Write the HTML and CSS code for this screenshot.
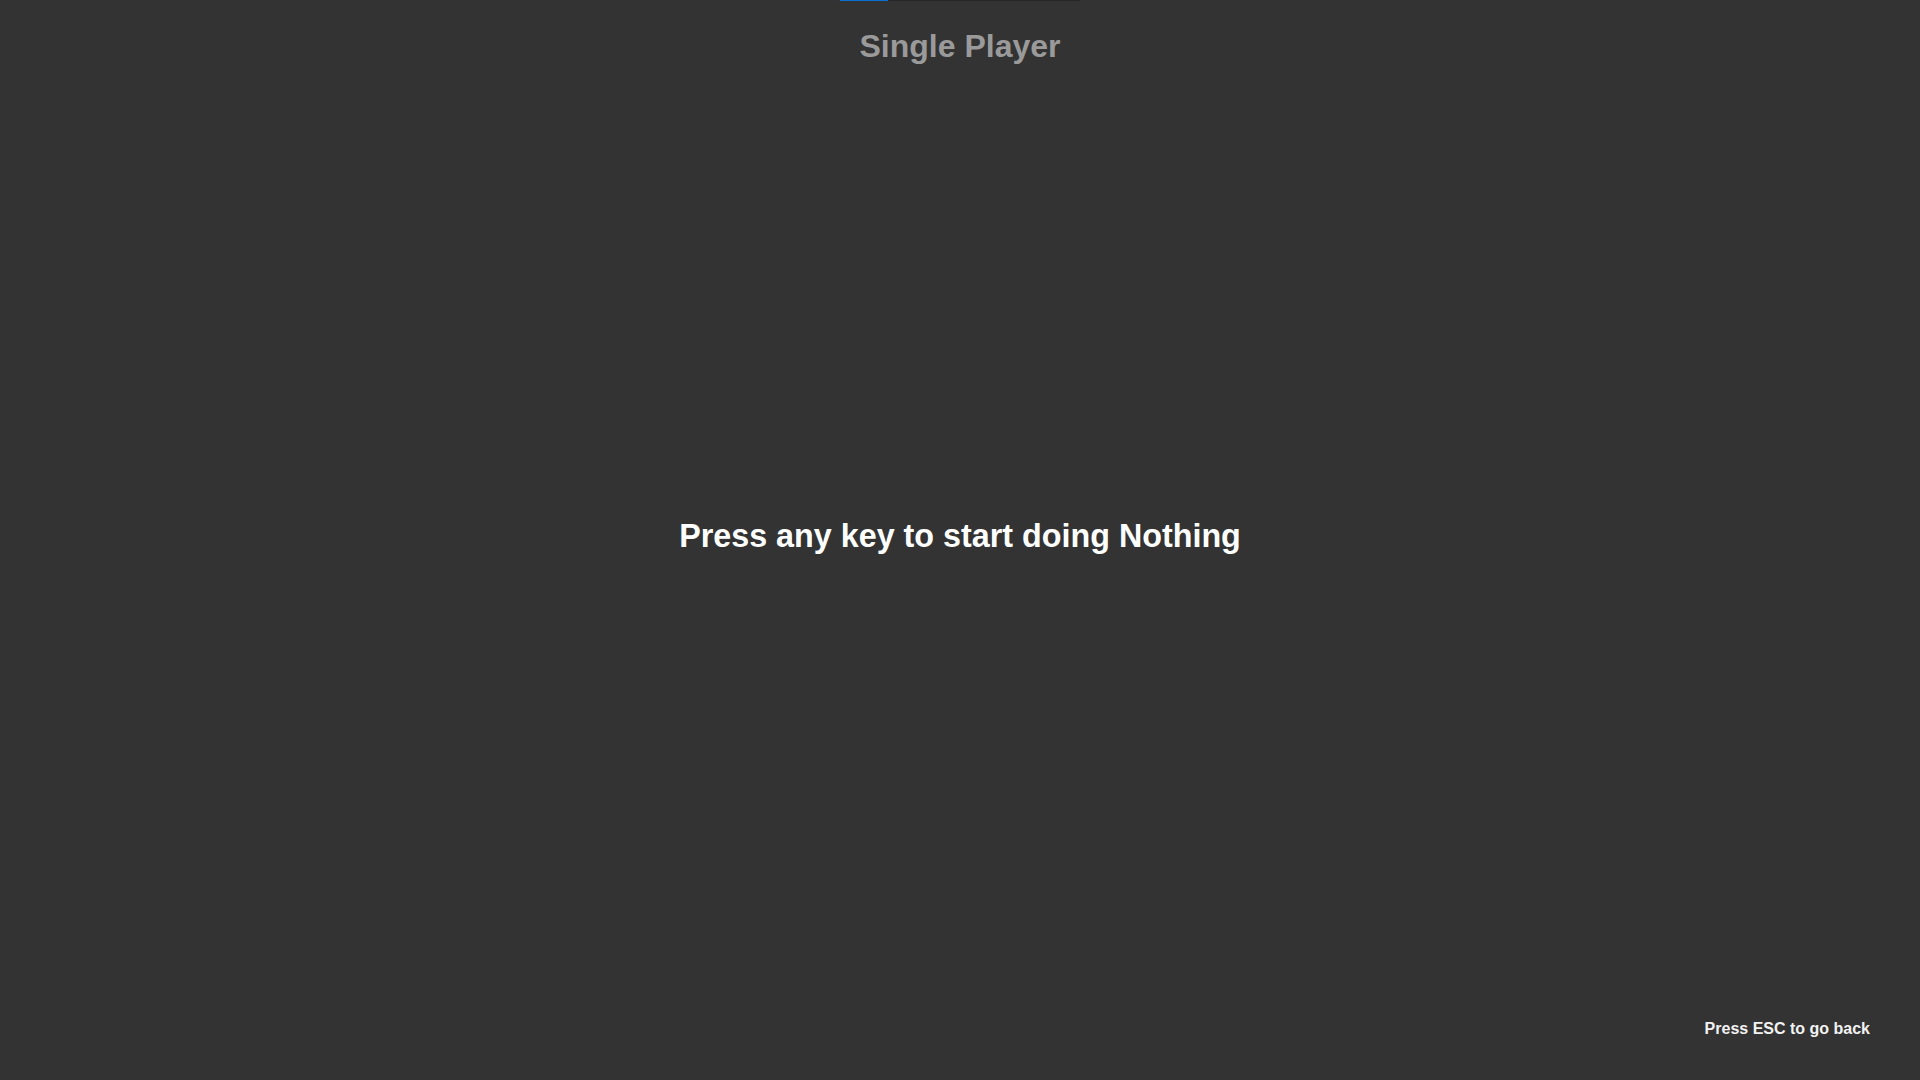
FILE: index.html
```html
<!DOCTYPE html>
<html lang="en">
<head>
<meta charset="utf-8">
<title>Single Player</title>
<link rel="stylesheet" href="styles.css">
</head>
<body>
<div class="screen">
  <header class="top">
    <div class="progress"><div class="progress-fill"></div></div>
    <h1 class="title">Single Player</h1>
  </header>
  <main class="center">
    <p class="prompt">Press any key to start doing Nothing</p>
  </main>
  <footer class="bottom">
    <span class="hint">Press ESC to go back</span>
  </footer>
</div>
</body>
</html>
```
FILE: styles.css
```css
html, body {
  margin: 0;
  padding: 0;
  height: 100%;
  background: #333333;
}
body {
  font-family: "Liberation Sans", Arial, Helvetica, sans-serif;
  overflow: hidden;
}
.screen {
  height: 100vh;
  display: grid;
  grid-template-rows: auto 1fr auto;
}
.top {
  display: flex;
  flex-direction: column;
  align-items: center;
}
.progress {
  width: 240px;
  height: 1px;
  background: #262626;
  display: flex;
}
.progress-fill {
  width: 20%;
  background: #0a70d6;
}
.title {
  margin: 27px 0 0;
  font-size: 32px;
  font-weight: 700;
  line-height: 37px;
  color: #9a9a9a;
}
.center {
  display: flex;
  align-items: center;
  justify-content: center;
}
.prompt {
  margin: 0 0 12px;
  font-size: 32.3px;
  font-weight: 700;
  line-height: 37px;
  color: #ffffff;
}
.bottom {
  display: flex;
  justify-content: flex-end;
  padding: 0 50px 42px 0;
}
.hint {
  font-size: 16px;
  font-weight: 700;
  line-height: 18px;
  color: #f2f2f2;
}
```
